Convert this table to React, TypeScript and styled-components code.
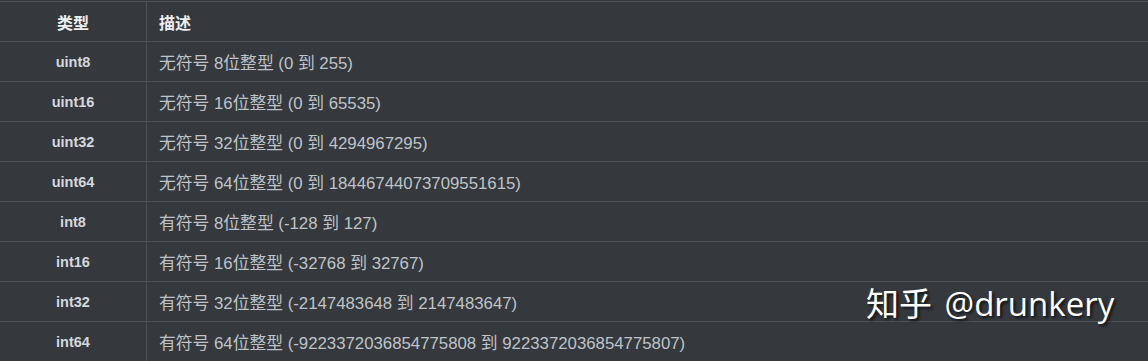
import React from 'react';
import styled, { createGlobalStyle } from 'styled-components';

const GlobalStyle = createGlobalStyle`
  html, body {
    margin: 0;
    padding: 0;
    background: #35393d;
  }
`;

const rows = [
  { type: 'uint8', desc: '无符号 8位整型 (0 到 255)' },
  { type: 'uint16', desc: '无符号 16位整型 (0 到 65535)' },
  { type: 'uint32', desc: '无符号 32位整型 (0 到 4294967295)' },
  { type: 'uint64', desc: '无符号 64位整型 (0 到 18446744073709551615)' },
  { type: 'int8', desc: '有符号 8位整型 (-128 到 127)' },
  { type: 'int16', desc: '有符号 16位整型 (-32768 到 32767)' },
  { type: 'int32', desc: '有符号 32位整型 (-2147483648 到 2147483647)' },
  { type: 'int64', desc: '有符号 64位整型 (-9223372036854775808 到 9223372036854775807)' },
];

export default function App() {
  return (
    <>
      <GlobalStyle />
      <Page>
        <Table>
          <thead>
            <tr>
              <HeadCell $center>类型</HeadCell>
              <HeadCell>描述</HeadCell>
            </tr>
          </thead>
          <tbody>
            {rows.map((r) => (
              <tr key={r.type}>
                <TypeCell>{r.type}</TypeCell>
                <DescCell>{r.desc}</DescCell>
              </tr>
            ))}
          </tbody>
        </Table>
        <Watermark>知乎 @drunkery</Watermark>
      </Page>
    </>
  );
}

const Page = styled.div`
  position: relative;
  width: 1148px;
  height: 361px;
  padding-top: 1px;
  box-sizing: border-box;
  overflow: hidden;
  background: #35393d;
`;

const Table = styled.table`
  width: 100%;
  border-collapse: collapse;
  border-top: 1px solid #4b4f57;
  font-family: 'Liberation Sans', 'Noto Sans CJK SC', sans-serif;

  tr {
    height: 40px;
    border-bottom: 1px solid #4b4f57;
  }
  td,
  th {
    padding: 0;
    vertical-align: middle;
  }
  td:first-child,
  th:first-child {
    width: 146px;
    border-right: 1px solid #4b4f57;
  }
`;

const HeadCell = styled.th<{ $center?: boolean }>`
  text-align: ${(p) => (p.$center ? 'center' : 'left')};
  padding-left: ${(p) => (p.$center ? '0' : '12px')} !important;
  font-size: 16px;
  font-weight: bold;
  color: #eceef0;
`;

const TypeCell = styled.td`
  text-align: center;
  font-weight: bold;
  font-size: 14.5px;
  color: #d3d8df;
`;

const DescCell = styled.td`
  padding-left: 12px !important;
  font-size: 16.8px;
  color: #bfc3c8;
`;

const Watermark = styled.div`
  position: absolute;
  left: 866px;
  top: 280px;
  font-family: 'Open Sans', 'Noto Sans CJK SC', sans-serif;
  font-size: 33px;
  line-height: 48px;
  color: #ffffff;
  white-space: pre;
  text-shadow: 2px 2px 3px rgba(0, 0, 0, 0.7);
  word-spacing: 4px;
`;
